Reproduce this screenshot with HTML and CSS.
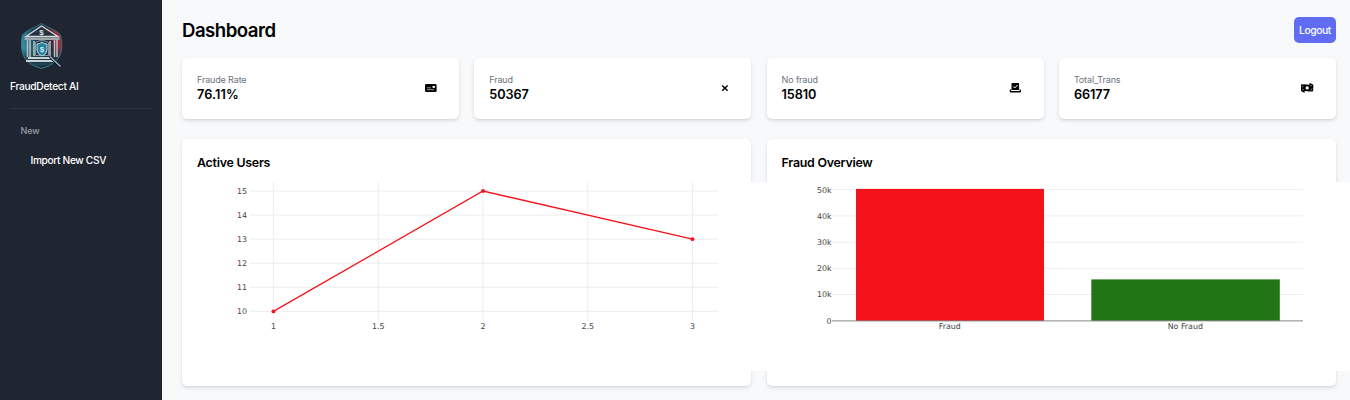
FILE: index.html
```html
<!DOCTYPE html>
<html lang="en">
<head>
<meta charset="utf-8">
<title>Dashboard</title>
<link rel="stylesheet" href="styles.css">
</head>
<body>
<div class="app">
  <aside class="sidebar">
    <svg class="logo" viewBox="0 0 44 48">
      <defs>
        <linearGradient id="shield" x1="0" x2="1" y1="0.3" y2="0">
          <stop offset="0" stop-color="#358a9b"/><stop offset=".35" stop-color="#163849"/>
          <stop offset=".62" stop-color="#2a2b3a"/><stop offset=".82" stop-color="#a52b3c"/><stop offset="1" stop-color="#70222f"/>
        </linearGradient>
        <linearGradient id="fade" x1="0" x2="0" y1="0" y2="1">
          <stop offset=".55" stop-color="#1d3444" stop-opacity="0"/><stop offset=".85" stop-color="#1d3444"/>
        </linearGradient>
      </defs>
      <path d="M21.500 1.500C28 6 35 7 40.500 13C43 24 42 33 36 39Q29 45 21.500 46.500Q12 44 6 38C1 31 .5 22 2.500 13C8 7 15 6 21.500 1.500Z" fill="url(#shield)"/>
      <path d="M21.500 1.500C28 6 35 7 40.500 13C43 24 42 33 36 39Q29 45 21.500 46.500Q12 44 6 38C1 31 .5 22 2.500 13C8 7 15 6 21.500 1.500Z" fill="url(#fade)" stroke="#347f90" stroke-width=".9"/>
      <path d="M6 14.500L21.500 4L38 14.500Z" fill="#26323e" stroke="#d5dadd" stroke-width="1.300"/>
      <path d="M4.500 15.500h35v2.500h-35z" fill="#9ea9af"/>
      <path d="M7.500 18v17M10 18v17M14 19v15M30 19v15M34.500 18v17M37 18v17" stroke="#b9c1c5" stroke-width="1.500"/>
      <path d="M15.500 20.500q6-4 13 0v13h-13z" fill="#233844" stroke="#8498a2"/>
      <path d="M17 22q3 0 5-1.700q2 1.700 5 1.700v6q0 4-5 6q-5-2-5-6z" fill="#2681a1" stroke="#b9dce4" stroke-width="1"/>
      <path d="M8 36h25M6 39h29" stroke="#cbd2d4" stroke-width="2"/>
      <path d="M9 42h24" stroke="#215168"/>
      <path d="M30 34.500L40.500 45" stroke="#101923" stroke-width="3"/>
      <path d="M30 34.500L40.500 44.500" stroke="#9fc5d3" stroke-width="1.200"/>
      <text x="21.500" y="12.500" text-anchor="middle" class="logo-coin">$</text>
      <text x="22" y="30.300" text-anchor="middle" class="logo-coin">$</text>
    </svg>
    <div class="brand">FraudDetect AI</div>
    <div class="section">New</div>
    <a class="nav-link">Import New CSV</a>
  </aside>
  <main class="main">
    <header class="header">
      <h1 class="title">Dashboard</h1>
      <button class="logout">Logout</button>
    </header>
    <section class="stats">
      <article class="card stat">
        <div><div class="label">Fraude Rate</div><div class="value rate">76.11%</div></div>
        <svg class="icon" viewBox="0 0 14 12"><rect x="1" y="2" width="11.600" height="8" rx="1.200"/><path d="M3 5.800h4M3 7.700h7" stroke="#bbb" stroke-width=".8"/><rect x="8.500" y="4" width="2.500" height="1.800" fill="#fff"/></svg>
      </article>
      <article class="card stat">
        <div><div class="label">Fraud</div><div class="value">50367</div></div>
        <svg class="icon" viewBox="0 0 14 12"><path d="M6.200 3.400l5.400 5.400M11.600 3.400l-5.400 5.400" stroke="#000" stroke-width="1.400"/></svg>
      </article>
      <article class="card stat">
        <div><div class="label">No fraud</div><div class="value">15810</div></div>
        <svg class="icon" viewBox="0.500 0 14 12"><path d="M3 1.800q0-.8.800-.8h6q.8 0 .8.800v6.200H3zM1.800 7.500h.8v1.400h8.500V7.500h.8q.6 0 .6.700v1.400q0 .9-.9.900H2.100q-.9 0-.9-.9V8.200q0-.7.600-.7z"/><path d="M4.800 4.600l1.400 1.400 2.900-3" fill="none" stroke="#fff" stroke-width="1"/></svg>
      </article>
      <article class="card stat">
        <div><div class="label">Total_Trans</div><div class="value">66177</div></div>
        <svg class="icon" viewBox="1 0 14 12"><path d="M1 2.600q2.500-.8 5.500 0l3 .2V.8l3.900 2-.3 6.400q-2.500.8-5.500 0l-3-.1v1.900L1 9z"/><circle cx="7.200" cy="5.900" r="1.700" fill="#fff"/><path d="M2.300 5.400V4.200q1 0 1.400-.7M11.800 6.500v1.300q-1 0-1.400.7M2 7.800l2-.2M10 3.800l2-.2" fill="none" stroke="#bbb" stroke-width=".6"/></svg>
      </article>
    </section>
    <section class="charts">
      <article class="card panel">
        <h2 class="panel-title">Active Users</h2>
        <svg class="plot" viewBox="197 182 574 189.800">
          <rect x="197" y="182" width="574" height="189.800" fill="#fff"/>
          <g class="grid">
            <path d="M250 191H718M250 215.100H718M250 239.200H718M250 263.300H718M250 287.300H718M250 311.400H718"/>
            <path d="M273.400 182V320.500M378.300 182V320.500M483 182V320.500M587.700 182V320.500M692.500 182V320.500"/>
          </g>
          <path d="M273.400 311.400L483 191L692.500 239.200" fill="none" stroke="#f5131b" stroke-width="1.300"/>
          <g fill="#f5131b"><circle cx="273.400" cy="311.400" r="1.900"/><circle cx="483" cy="191" r="1.900"/><circle cx="692.500" cy="239.200" r="1.900"/></g>
          <g class="tick end"><text x="247" y="194">15</text><text x="247" y="218.100">14</text><text x="247" y="242.200">13</text><text x="247" y="266.300">12</text><text x="247" y="290.300">11</text><text x="247" y="314.400">10</text></g>
          <g class="tick mid"><text x="273.400" y="329.300">1</text><text x="378.300" y="329.300">1.5</text><text x="483" y="329.300">2</text><text x="587.700" y="329.300">2.5</text><text x="692.500" y="329.300">3</text></g>
        </svg>
      </article>
      <article class="card panel">
        <h2 class="panel-title">Fraud Overview</h2>
        <svg class="plot" viewBox="782 182 574 189.800">
          <rect x="782" y="182" width="574" height="189.800" fill="#fff"/>
          <path class="grid" d="M832 189.600H1303M832 215.900H1303M832 242.100H1303M832 268.300H1303M832 294.500H1303"/>
          <rect x="856" y="188.900" width="188" height="132" fill="#f5131b"/>
          <rect x="1091.300" y="279.400" width="188.500" height="41.400" fill="#217515"/>
          <path d="M832 320.900H1303" stroke="#777" stroke-width=".9"/>
          <g class="tick end"><text x="831.500" y="192.600">50k</text><text x="831.500" y="218.900">40k</text><text x="831.500" y="245.100">30k</text><text x="831.500" y="271.300">20k</text><text x="831.500" y="297.500">10k</text><text x="831.500" y="323.700">0</text></g>
          <g class="tick mid"><text x="949.700" y="329.300">Fraud</text><text x="1185.300" y="329.300">No Fraud</text></g>
        </svg>
      </article>
    </section>
  </main>
</div>
</body>
</html>
```
FILE: styles.css
```css
* { box-sizing: border-box; }
body { margin: 0; font-family: Inter, sans-serif; background: #f8f9fb; overflow: hidden; }
.app { display: flex; height: 400px; }
.sidebar { flex: none; width: 161.5px; padding: 22px 10px 0; background: #1f2631; color: #fff; }
.logo { display: block; width: 44px; height: 48px; margin-left: 10px; }
.logo-coin { font: 700 8px "Liberation Sans", sans-serif; fill: #dce6e9; }
.brand { height: 38.5px; padding-top: 9px; border-bottom: 1px solid #2c3440; font-size: 10.2px; line-height: 14px; font-weight: 500; letter-spacing: -.3px; white-space: nowrap; }
.section { margin: 15px 0 0 10.5px; font-size: 9px; line-height: 14px; font-weight: 500; letter-spacing: -.1px; color: #989ea9; }
.nav-link { display: block; margin: 15px 0 0 20.5px; font-size: 10.2px; line-height: 15px; font-weight: 500; letter-spacing: -.36px; }
.main { flex: 1; min-width: 0; padding: 17px 14px 0 20.5px; }
.header { display: flex; justify-content: space-between; height: 41px; }
.title { margin: 0; font-size: 18.6px; line-height: 27px; font-weight: 600; letter-spacing: -.5px; }
.logout { width: 42px; height: 26px; padding: 0; border: 0; border-radius: 5px; background: #606cf2; color: #fff; font: 500 10.3px Inter, sans-serif; letter-spacing: -.4px; }
.card { background: #fff; border-radius: 5px; box-shadow: 0 2px 4px rgba(0,0,0,.1), 0 1px 2px rgba(0,0,0,.06); }
.stats { display: grid; grid-template-columns: repeat(4, 1fr); gap: 15.2px; }
.stat { display: flex; align-items: center; justify-content: space-between; height: 60.5px; padding: 0 21px 0 15px; }
.label { font-size: 9px; line-height: 13px; letter-spacing: -.14px; color: #6b7280; }
.value { font-size: 12.7px; line-height: 17px; font-weight: 600; letter-spacing: -.1px; }
.rate { letter-spacing: .1px; }
.icon { width: 14px; height: 12px; }
.charts { display: grid; grid-template-columns: repeat(2, minmax(0, 1fr)); gap: 15.2px; margin-top: 20.5px; }
.panel { height: 247px; padding: 15px; }
.panel-title { margin: 0; height: 27.5px; font-size: 12.4px; line-height: 18px; font-weight: 600; letter-spacing: -.25px; }
.plot { position: relative; z-index: 1; display: block; width: 574px; height: 189.8px; }
.grid { stroke: #eee; stroke-width: 1; }
.tick { font: 7.9px "DejaVu Sans", sans-serif; fill: #444; }
.end { text-anchor: end; }
.mid { text-anchor: middle; }
```
